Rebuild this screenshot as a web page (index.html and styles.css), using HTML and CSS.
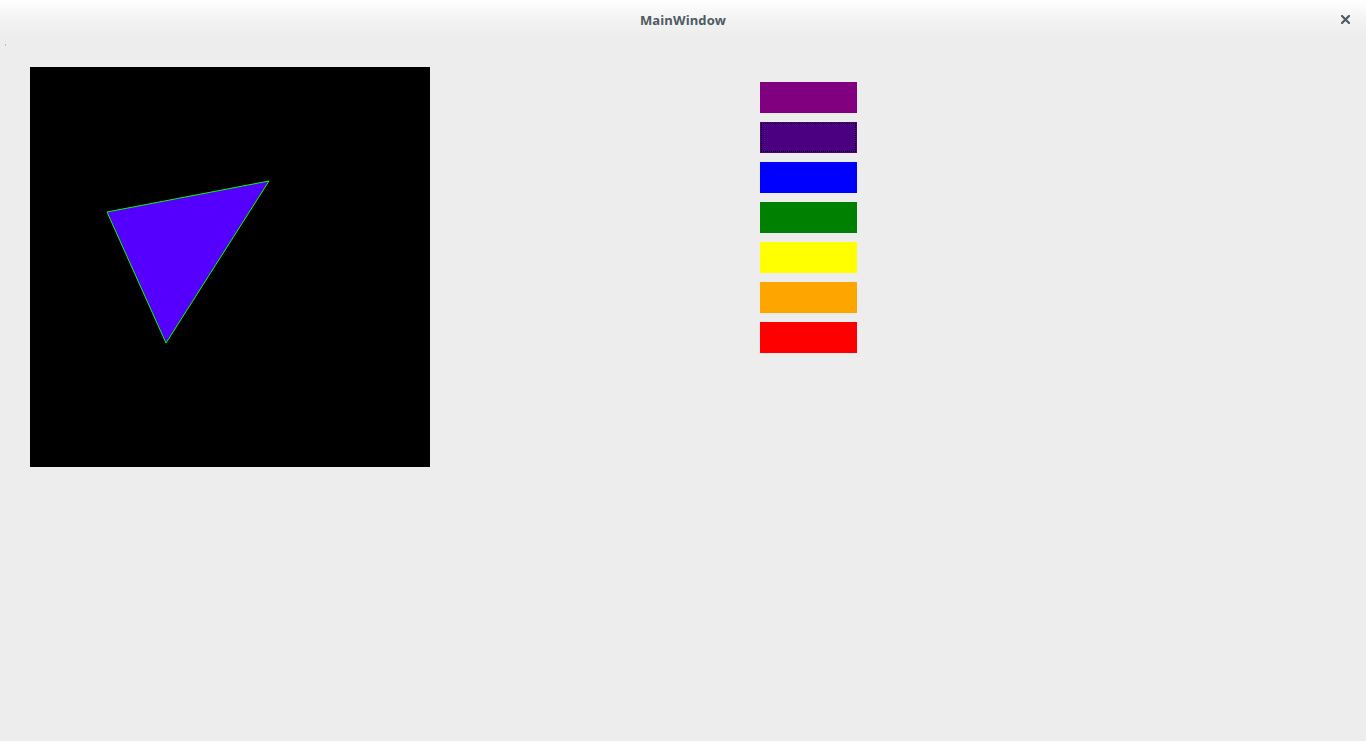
FILE: index.html
```html
<!DOCTYPE html>
<html>
<head>
<meta charset="utf-8">
<link rel="stylesheet" href="styles.css">
</head>
<body>
<div class="window">
  <header class="titlebar">
    <span class="title">MainWindow</span>
    <span class="close">
      <svg width="9" height="9" viewBox="0 0 9 9"><path d="M1 1 L8 8 M8 1 L1 8" stroke="#4f5b62" stroke-width="2.2" stroke-linecap="square"/></svg>
    </span>
  </header>
  <div class="menubar"><span class="dot dot1"></span><span class="dot dot2"></span></div>
  <main class="content">
    <div class="canvas">
      <svg width="400" height="400" viewBox="0 0 400 400">
        <rect width="400" height="400" fill="#000"/>
        <polygon points="77,145 239,114 136,276" fill="#5500ff" stroke="#00ff00" stroke-width="1"/>
      </svg>
    </div>
    <div class="palette">
      <div class="swatch purple"></div>
      <div class="swatch indigo focused"></div>
      <div class="swatch blue"></div>
      <div class="swatch green"></div>
      <div class="swatch yellow"></div>
      <div class="swatch orange"></div>
      <div class="swatch red"></div>
    </div>
  </main>
</div>
</body>
</html>
```
FILE: styles.css
```css
html, body {
  margin: 0;
  padding: 0;
  background: #ededed;
  width: 1366px;
  height: 741px;
  overflow: hidden;
}
.window {
  display: flex;
  flex-direction: column;
  height: 741px;
  font-family: "Open Sans", "DejaVu Sans", sans-serif;
}
.titlebar {
  position: relative;
  height: 38px;
  flex: none;
  display: flex;
  align-items: center;
  justify-content: center;
  background: linear-gradient(to bottom, #ffffff 0%, #f3f3f3 50%, #ededed 100%);
}
.title {
  font-weight: 700;
  font-size: 13px;
  color: #4f5b62;
  letter-spacing: 0.1px;
  margin-top: 1px;
}
.close {
  position: absolute;
  right: 16px;
  top: 15px;
  width: 9px;
  height: 9px;
  display: flex;
}
.menubar {
  position: relative;
  height: 29px;
  flex: none;
}
.dot {
  position: absolute;
  left: 5px;
  width: 1px;
  height: 1px;
}
.dot1 { top: 3px; background: #dcdcdc; }
.dot2 { top: 6px; height: 2px; background: #bdbdbd; }
.content {
  display: flex;
  align-items: flex-start;
  padding-left: 30px;
}
.canvas {
  width: 400px;
  height: 400px;
  display: flex;
}
.palette {
  margin-left: 330px;
  margin-top: 15px;
  display: flex;
  flex-direction: column;
  gap: 9px;
}
.swatch {
  width: 97px;
  height: 31px;
  box-sizing: border-box;
}
.focused {
  outline: 1px dotted #000;
  outline-offset: -2px;
}
.purple { background: #800080; }
.indigo { background: #4b0082; }
.blue { background: #0000ff; }
.green { background: #008000; }
.yellow { background: #ffff00; }
.orange { background: #ffa500; }
.red { background: #ff0000; }
```
